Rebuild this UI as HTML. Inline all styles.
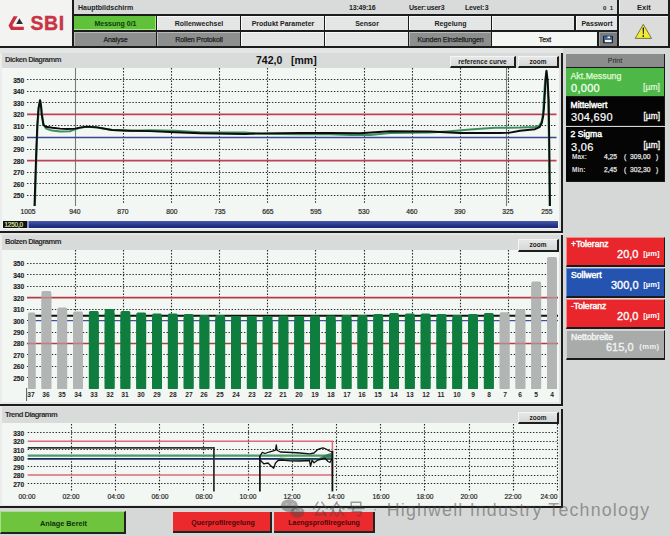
<!DOCTYPE html>
<html><head><meta charset="utf-8">
<style>
html,body{margin:0;padding:0;}
body{width:670px;height:536px;overflow:hidden;position:relative;background:#d6d8d8;font-family:"Liberation Sans", sans-serif;}
div{position:absolute;box-sizing:border-box;}
.t{white-space:nowrap;}
svg{position:absolute;}
</style></head><body>
<div style="left:0px;top:0px;width:72px;height:46px;background:#f3f4f2;"></div>
<svg style="position:absolute;left:0;top:0" width="72" height="46" viewBox="0 0 72 46">
<path d="M13.6 16.3 L17.6 16.3 L12.4 25.3 L13.6 26.8 L23.8 26.8 L23.8 29.9 L10.9 29.9 L8.5 25.4 Z" fill="#cc3040"/>
<path d="M19.4 18.3 L22.9 24 L16.2 24 Z" fill="#2e2e2e"/>
</svg>
<div class="t" style="left:30.5px;top:12px;font-size:19.5px;font-weight:bold;color:#c83444;letter-spacing:0.6px;line-height:22px;-webkit-text-stroke:0.4px #c83444;">SBI</div>
<div style="left:72px;top:0px;width:2px;height:47px;background:#1c1c1c;"></div>
<div style="left:0px;top:46px;width:670px;height:2px;background:#1c1c1c;"></div>
<div style="left:74px;top:0px;width:543px;height:14px;background:#d9dada;"></div>
<div class="t" style="left:78px;top:3px;font-size:7px;font-weight:bold;color:#222;line-height:9px;">Hauptbildschirm</div>
<div class="t" style="left:349px;top:3px;font-size:7px;font-weight:bold;color:#222;line-height:9px;letter-spacing:-0.2px;word-spacing:-1px;">13:49:16</div>
<div class="t" style="left:409px;top:3px;font-size:7px;font-weight:bold;color:#222;line-height:9px;letter-spacing:-0.2px;word-spacing:-1px;">User: user3</div>
<div class="t" style="left:465px;top:3px;font-size:7px;font-weight:bold;color:#222;line-height:9px;letter-spacing:-0.2px;word-spacing:-1px;">Level: 3</div>
<div class="t" style="left:603px;top:3.5px;font-size:6px;font-weight:bold;color:#222;line-height:9px;">0&nbsp;&nbsp;1</div>
<div style="left:74px;top:14px;width:596px;height:2px;background:#1c1c1c;"></div>
<div style="left:617px;top:0px;width:2px;height:47px;background:#1c1c1c;"></div>
<div style="left:619px;top:0px;width:49px;height:14px;background:#dcdcdc;border-left:1px solid #f0f0f0;"></div>
<div class="t" style="left:544px;top:3px;width:200px;text-align:center;font-size:7.5px;font-weight:bold;color:#222;line-height:9px;">Exit</div>
<div style="left:619px;top:16px;width:49px;height:30px;background:#dcdcdc;border-left:1px solid #f0f0f0;border-top:1px solid #f0f0f0;"></div>
<svg style="position:absolute;left:619px;top:16px" width="50" height="30" viewBox="0 0 50 30">
<path d="M24.3 8.3 L32.5 22.4 L16.2 22.4 Z" fill="#f0ea38" stroke="#6a6a3a" stroke-width="0.9" stroke-linejoin="round"/>
<path d="M23.6 11.5 L25 11.5 L24.7 18.3 L23.9 18.3 Z" fill="#111"/>
<rect x="23.6" y="19.3" width="1.4" height="1.6" fill="#111"/>
</svg>
<div style="left:668px;top:0px;width:2px;height:47px;background:#1c1c1c;"></div>
<div style="left:74px;top:30px;width:543px;height:2px;background:#1c1c1c;"></div>
<div style="left:74px;top:16px;width:543px;height:30px;background:#1c1c1c;z-index:-1;"></div>
<div style="left:74px;top:16px;width:82px;height:14px;background:#5fc23a;border-right:1px solid #a8e88a;border-bottom:1px solid #a8e88a;"></div>
<div class="t" style="left:15.5px;top:19px;width:200px;text-align:center;font-size:7px;font-weight:bold;color:#0f3a0a;line-height:9px;letter-spacing:0;">Messung 0/1</div>
<div style="left:157px;top:16px;width:83px;height:14px;background:#e4e5e5;border-top:1px solid #f8f8f8;border-left:1px solid #f8f8f8;"></div>
<div class="t" style="left:99.0px;top:19px;width:200px;text-align:center;font-size:7px;font-weight:bold;color:#222;line-height:9px;letter-spacing:0;">Rollenwechsel</div>
<div style="left:241px;top:16px;width:83px;height:14px;background:#e4e5e5;border-top:1px solid #f8f8f8;border-left:1px solid #f8f8f8;"></div>
<div class="t" style="left:183.0px;top:19px;width:200px;text-align:center;font-size:7px;font-weight:bold;color:#222;line-height:9px;letter-spacing:0;">Produkt Parameter</div>
<div style="left:325px;top:16px;width:83px;height:14px;background:#e4e5e5;border-top:1px solid #f8f8f8;border-left:1px solid #f8f8f8;"></div>
<div class="t" style="left:267.0px;top:19px;width:200px;text-align:center;font-size:7px;font-weight:bold;color:#222;line-height:9px;letter-spacing:0;">Sensor</div>
<div style="left:409px;top:16px;width:82px;height:14px;background:#e4e5e5;border-top:1px solid #f8f8f8;border-left:1px solid #f8f8f8;"></div>
<div class="t" style="left:350.5px;top:19px;width:200px;text-align:center;font-size:7px;font-weight:bold;color:#222;line-height:9px;letter-spacing:0;">Regelung</div>
<div style="left:492px;top:16px;width:82px;height:14px;background:#e4e5e5;border-top:1px solid #f8f8f8;border-left:1px solid #f8f8f8;"></div>
<div style="left:576px;top:16px;width:41px;height:14px;background:#e4e5e5;border-top:1px solid #f8f8f8;border-left:1px solid #f8f8f8;"></div>
<div class="t" style="left:497.0px;top:19px;width:200px;text-align:center;font-size:7px;font-weight:bold;color:#222;line-height:9px;letter-spacing:0;">Passwort</div>
<div style="left:74px;top:32px;width:82px;height:14px;background:#8d8f8f;border-top:1px solid #b8baba;border-left:1px solid #b8baba;"></div>
<div class="t" style="left:15.5px;top:35px;width:200px;text-align:center;font-size:7px;font-weight:normal;color:#1e1e1e;line-height:9px;letter-spacing:-0.1px;-webkit-text-stroke:0.25px #1e1e1e;">Analyse</div>
<div style="left:157px;top:32px;width:83px;height:14px;background:#8d8f8f;border-top:1px solid #b8baba;border-left:1px solid #b8baba;"></div>
<div class="t" style="left:99.0px;top:35px;width:200px;text-align:center;font-size:7px;font-weight:normal;color:#1e1e1e;line-height:9px;letter-spacing:-0.1px;-webkit-text-stroke:0.25px #1e1e1e;">Rollen Protokoll</div>
<div style="left:241px;top:32px;width:83px;height:14px;background:#e4e5e5;border-top:1px solid #f8f8f8;border-left:1px solid #f8f8f8;"></div>
<div style="left:325px;top:32px;width:83px;height:14px;background:#e4e5e5;border-top:1px solid #f8f8f8;border-left:1px solid #f8f8f8;"></div>
<div style="left:409px;top:32px;width:82px;height:14px;background:#8d8f8f;border-top:1px solid #b8baba;border-left:1px solid #b8baba;"></div>
<div class="t" style="left:350.5px;top:35px;width:200px;text-align:center;font-size:7px;font-weight:normal;color:#1e1e1e;line-height:9px;letter-spacing:-0.1px;-webkit-text-stroke:0.25px #1e1e1e;">Kunden Einstellungen</div>
<div style="left:492px;top:32px;width:105px;height:14px;background:#f4f6f4;"></div>
<div class="t" style="left:445.0px;top:35px;width:200px;text-align:center;font-size:7px;font-weight:normal;color:#222;line-height:9px;letter-spacing:-0.1px;-webkit-text-stroke:0.25px #222;">Text</div>
<div style="left:599px;top:32px;width:18px;height:14px;background:#7a7c7e;border-top:1px solid #a0a2a4;border-left:1px solid #a0a2a4;"></div>
<svg style="position:absolute;left:599px;top:32px" width="18" height="14" viewBox="0 0 18 14">
<rect x="4" y="3.7" width="10" height="7.6" rx="1" fill="#1a2030"/>
<rect x="5" y="4.4" width="8" height="3.2" fill="#3a6a9a"/>
<rect x="8.5" y="4.5" width="2.5" height="1.6" fill="#e8f4ff"/>
<rect x="5.7" y="7.8" width="7" height="2.4" fill="#f4f6f8"/>
</svg>
<div style="left:0px;top:48px;width:563px;height:5px;background:#e4e5e5;"></div>
<div style="left:0px;top:53px;width:2px;height:179px;#ececec;background:#ececec;"></div>
<div style="left:2px;top:53px;width:559px;height:15px;background:#d9dada;"></div>
<div class="t" style="left:5px;top:54.6px;font-size:7.6px;font-weight:bold;color:#2e2e2e;letter-spacing:-0.55px;line-height:10px;">Dicken Diagramm</div>
<div class="t" style="left:256px;top:54px;font-size:10.5px;font-weight:bold;color:#111;line-height:12px;">742,0&nbsp;&nbsp;&nbsp;[mm]</div>
<div style="left:450px;top:56px;width:66px;height:12px;background:linear-gradient(#e6e7e7,#d6d7d7);border-right:2px solid #1e1e1e;border-bottom:2px solid #1e1e1e;border-top:1px solid #f4f4f4;border-left:1px solid #f4f4f4;"></div>
<div class="t" style="left:382.5px;top:57px;width:200px;text-align:center;font-size:6.5px;font-weight:bold;color:#1a1a1a;line-height:9px;">reference curve</div>
<div style="left:518px;top:56px;width:41px;height:12px;background:linear-gradient(#e6e7e7,#d6d7d7);border-right:2px solid #1e1e1e;border-bottom:2px solid #1e1e1e;border-top:1px solid #f4f4f4;border-left:1px solid #f4f4f4;"></div>
<div class="t" style="left:438.0px;top:57px;width:200px;text-align:center;font-size:6.5px;font-weight:bold;color:#1a1a1a;line-height:9px;">zoom</div>
<div style="left:2px;top:68px;width:559px;height:163px;background:#f3f7f3;border-right:2px solid #e0e2e2;border-bottom:2px solid #e6e8e8;"></div>
<div style="left:561px;top:53px;width:2px;height:179px;background:#1c1c1c;"></div>
<div style="left:0px;top:231px;width:563px;height:2px;background:#1c1c1c;"></div>
<div style="left:0px;top:233px;width:563px;height:2px;background:#e4e5e5;"></div>
<div style="left:0px;top:235px;width:2px;height:170px;background:#ececec;"></div>
<div style="left:2px;top:235px;width:559px;height:15px;background:#d9dada;"></div>
<div class="t" style="left:5px;top:236.8px;font-size:7.6px;font-weight:bold;color:#2e2e2e;letter-spacing:-0.55px;line-height:10px;">Bolzen Diagramm</div>
<div style="left:2px;top:250px;width:559px;height:154px;background:#f3f7f3;border-right:2px solid #e0e2e2;border-bottom:2px solid #e6e8e8;"></div>
<div style="left:518px;top:239px;width:41px;height:12.5px;background:linear-gradient(#e6e7e7,#d6d7d7);border-right:2px solid #1e1e1e;border-bottom:2px solid #1e1e1e;border-top:1px solid #f4f4f4;border-left:1px solid #f4f4f4;"></div>
<div class="t" style="left:438.0px;top:240px;width:200px;text-align:center;font-size:6.5px;font-weight:bold;color:#1a1a1a;line-height:9px;">zoom</div>
<div style="left:561px;top:235px;width:2px;height:170px;background:#1c1c1c;"></div>
<div style="left:0px;top:404px;width:563px;height:2px;background:#1c1c1c;"></div>
<div style="left:0px;top:406px;width:563px;height:1px;background:#e4e5e5;"></div>
<div style="left:0px;top:407px;width:2px;height:101px;background:#ececec;"></div>
<div style="left:2px;top:407px;width:559px;height:16px;background:#d9dada;"></div>
<div class="t" style="left:5px;top:410px;font-size:7.6px;font-weight:bold;color:#2e2e2e;letter-spacing:-0.55px;line-height:10px;">Trend Diagramm</div>
<div style="left:2px;top:423px;width:559px;height:83px;background:#f3f7f3;border-right:2px solid #e0e2e2;border-bottom:1px solid #e6e8e8;"></div>
<div style="left:518px;top:412px;width:41px;height:12px;background:linear-gradient(#e6e7e7,#d6d7d7);border-right:2px solid #1e1e1e;border-bottom:2px solid #1e1e1e;border-top:1px solid #f4f4f4;border-left:1px solid #f4f4f4;"></div>
<div class="t" style="left:438.0px;top:413px;width:200px;text-align:center;font-size:6.5px;font-weight:bold;color:#1a1a1a;line-height:9px;">zoom</div>
<div style="left:561px;top:409px;width:2px;height:99px;background:#1c1c1c;"></div>
<div style="left:0px;top:506px;width:563px;height:2px;background:#1c1c1c;"></div>
<div class="t" style="left:-175.8px;top:191.2px;width:200px;text-align:right;transform:scaleX(0.86);transform-origin:100% 50%;font-size:7.7px;font-weight:bold;color:#1e1e1e;line-height:9px;letter-spacing:-0.1px;-webkit-text-stroke:0.15px #1e1e1e;">250</div>
<div class="t" style="left:-175.8px;top:179.65999999999997px;width:200px;text-align:right;transform:scaleX(0.86);transform-origin:100% 50%;font-size:7.7px;font-weight:bold;color:#1e1e1e;line-height:9px;letter-spacing:-0.1px;-webkit-text-stroke:0.15px #1e1e1e;">260</div>
<div class="t" style="left:-175.8px;top:168.12px;width:200px;text-align:right;transform:scaleX(0.86);transform-origin:100% 50%;font-size:7.7px;font-weight:bold;color:#1e1e1e;line-height:9px;letter-spacing:-0.1px;-webkit-text-stroke:0.15px #1e1e1e;">270</div>
<div class="t" style="left:-175.8px;top:156.57999999999998px;width:200px;text-align:right;transform:scaleX(0.86);transform-origin:100% 50%;font-size:7.7px;font-weight:bold;color:#1e1e1e;line-height:9px;letter-spacing:-0.1px;-webkit-text-stroke:0.15px #1e1e1e;">280</div>
<div class="t" style="left:-175.8px;top:145.04px;width:200px;text-align:right;transform:scaleX(0.86);transform-origin:100% 50%;font-size:7.7px;font-weight:bold;color:#1e1e1e;line-height:9px;letter-spacing:-0.1px;-webkit-text-stroke:0.15px #1e1e1e;">290</div>
<div class="t" style="left:-175.8px;top:133.5px;width:200px;text-align:right;transform:scaleX(0.86);transform-origin:100% 50%;font-size:7.7px;font-weight:bold;color:#1e1e1e;line-height:9px;letter-spacing:-0.1px;-webkit-text-stroke:0.15px #1e1e1e;">300</div>
<div class="t" style="left:-175.8px;top:121.96px;width:200px;text-align:right;transform:scaleX(0.86);transform-origin:100% 50%;font-size:7.7px;font-weight:bold;color:#1e1e1e;line-height:9px;letter-spacing:-0.1px;-webkit-text-stroke:0.15px #1e1e1e;">310</div>
<div class="t" style="left:-175.8px;top:110.41999999999999px;width:200px;text-align:right;transform:scaleX(0.86);transform-origin:100% 50%;font-size:7.7px;font-weight:bold;color:#1e1e1e;line-height:9px;letter-spacing:-0.1px;-webkit-text-stroke:0.15px #1e1e1e;">320</div>
<div class="t" style="left:-175.8px;top:98.88px;width:200px;text-align:right;transform:scaleX(0.86);transform-origin:100% 50%;font-size:7.7px;font-weight:bold;color:#1e1e1e;line-height:9px;letter-spacing:-0.1px;-webkit-text-stroke:0.15px #1e1e1e;">330</div>
<div class="t" style="left:-175.8px;top:87.34px;width:200px;text-align:right;transform:scaleX(0.86);transform-origin:100% 50%;font-size:7.7px;font-weight:bold;color:#1e1e1e;line-height:9px;letter-spacing:-0.1px;-webkit-text-stroke:0.15px #1e1e1e;">340</div>
<div class="t" style="left:-175.8px;top:75.8px;width:200px;text-align:right;transform:scaleX(0.86);transform-origin:100% 50%;font-size:7.7px;font-weight:bold;color:#1e1e1e;line-height:9px;letter-spacing:-0.1px;-webkit-text-stroke:0.15px #1e1e1e;">350</div>
<svg style="left:2px;top:68px" width="559" height="162" viewBox="2 68 559 162">
<line x1="27" y1="195.5" x2="556.5" y2="195.5" stroke="#2a2a2a" stroke-width="1.2" stroke-dasharray="1.4 1.7" fill="none"/>
<line x1="27" y1="183.5" x2="556.5" y2="183.5" stroke="#2a2a2a" stroke-width="1.2" stroke-dasharray="1.4 1.7" fill="none"/>
<line x1="27" y1="172.5" x2="556.5" y2="172.5" stroke="#2a2a2a" stroke-width="1.2" stroke-dasharray="1.4 1.7" fill="none"/>
<line x1="27" y1="149.5" x2="556.5" y2="149.5" stroke="#2a2a2a" stroke-width="1.2" stroke-dasharray="1.4 1.7" fill="none"/>
<line x1="27" y1="125.5" x2="556.5" y2="125.5" stroke="#2a2a2a" stroke-width="1.2" stroke-dasharray="1.4 1.7" fill="none"/>
<line x1="27" y1="102.5" x2="556.5" y2="102.5" stroke="#2a2a2a" stroke-width="1.2" stroke-dasharray="1.4 1.7" fill="none"/>
<line x1="27" y1="91.5" x2="556.5" y2="91.5" stroke="#2a2a2a" stroke-width="1.2" stroke-dasharray="1.4 1.7" fill="none"/>
<line x1="27" y1="79.5" x2="556.5" y2="79.5" stroke="#2a2a2a" stroke-width="1.2" stroke-dasharray="1.4 1.7" fill="none"/>
<line x1="123.5" y1="68" x2="123.5" y2="203" stroke="#2a2a2a" stroke-width="1.1" stroke-dasharray="1.5 1.6" fill="none"/>
<line x1="171.5" y1="68" x2="171.5" y2="203" stroke="#2a2a2a" stroke-width="1.1" stroke-dasharray="1.5 1.6" fill="none"/>
<line x1="219.5" y1="68" x2="219.5" y2="203" stroke="#2a2a2a" stroke-width="1.1" stroke-dasharray="1.5 1.6" fill="none"/>
<line x1="267.5" y1="68" x2="267.5" y2="203" stroke="#2a2a2a" stroke-width="1.1" stroke-dasharray="1.5 1.6" fill="none"/>
<line x1="315.5" y1="68" x2="315.5" y2="203" stroke="#2a2a2a" stroke-width="1.1" stroke-dasharray="1.5 1.6" fill="none"/>
<line x1="364.5" y1="68" x2="364.5" y2="203" stroke="#2a2a2a" stroke-width="1.1" stroke-dasharray="1.5 1.6" fill="none"/>
<line x1="412.5" y1="68" x2="412.5" y2="203" stroke="#2a2a2a" stroke-width="1.1" stroke-dasharray="1.5 1.6" fill="none"/>
<line x1="460.5" y1="68" x2="460.5" y2="203" stroke="#2a2a2a" stroke-width="1.1" stroke-dasharray="1.5 1.6" fill="none"/>
<line x1="508.5" y1="68" x2="508.5" y2="203" stroke="#2a2a2a" stroke-width="1.1" stroke-dasharray="1.5 1.6" fill="none"/>
<line x1="75.5" y1="68" x2="75.5" y2="206" stroke="#7a7a7a" stroke-width="1.1"/>
<line x1="506.5" y1="68" x2="506.5" y2="206" stroke="#7a7a7a" stroke-width="1.1"/>
<line x1="27" y1="114.4" x2="556.5" y2="114.4" stroke="#bc4256" stroke-width="1.7"/>
<line x1="27" y1="160.6" x2="556.5" y2="160.6" stroke="#bc4256" stroke-width="1.7"/>
<line x1="27" y1="137.5" x2="556.5" y2="137.5" stroke="#3a4694" stroke-width="1.5"/>
<polyline points="34.9,206 36.6,150 37.6,125 38.8,108 40.2,100.5 41.3,107 42,114 43.5,124 46,128.6 52,130.6 60,131.4 70,131.2 75,129.4 80,127.8 86.7,126.8 97.2,127.6 112,130 130,130.7 150,130.2 175,130.8 200,132.2 230,132.4 245,132.4 260,133.8 300,134.2 330,134.2 350,135 370,135 390,133 430,132.5 450,131.2 470,129.5 495,127.8 520,127.6 535,127 539.5,125.5 541.8,121 543,114 543.8,100 545,82 546.2,72 547.3,80 548.2,100 548.9,140 549.6,206" fill="none" stroke="#3c9062" stroke-width="2" stroke-linejoin="round"/>
<polyline points="34.5,206 36.3,150 37.3,125 38.5,108 40,100.2 41,106 41.6,114 43.4,125 45.7,126.8 52.4,127.8 60,128.6 67.3,129 75,128.6 80,127.6 86.7,126.6 97.2,127.4 112,130 130,130.7 150,131.1 175,132.2 200,133.2 230,133.8 245,134 260,133.4 300,133 330,133 360,133.2 390,131.3 430,131.5 460,133 500,133 510,132.6 520,130.7 535,129.2 539.5,127.2 541.8,123 543.2,116 544,108 544.6,98 545.6,80 546.5,70.7 547.6,80 548.7,100 549.4,150 550,206" fill="none" stroke="#0c0c0c" stroke-width="1.9" stroke-linejoin="round"/>
</svg>
<div class="t" style="left:-72.5px;top:206.5px;width:200px;text-align:center;transform:scaleX(0.88);font-size:7.7px;color:#262626;line-height:9px;-webkit-text-stroke:0.2px #262626;">1005</div>
<div class="t" style="left:-24.700000000000003px;top:206.5px;width:200px;text-align:center;transform:scaleX(0.88);font-size:7.7px;color:#262626;line-height:9px;-webkit-text-stroke:0.2px #262626;">940</div>
<div class="t" style="left:23.400000000000006px;top:206.5px;width:200px;text-align:center;transform:scaleX(0.88);font-size:7.7px;color:#262626;line-height:9px;-webkit-text-stroke:0.2px #262626;">870</div>
<div class="t" style="left:71.5px;top:206.5px;width:200px;text-align:center;transform:scaleX(0.88);font-size:7.7px;color:#262626;line-height:9px;-webkit-text-stroke:0.2px #262626;">800</div>
<div class="t" style="left:119.80000000000001px;top:206.5px;width:200px;text-align:center;transform:scaleX(0.88);font-size:7.7px;color:#262626;line-height:9px;-webkit-text-stroke:0.2px #262626;">735</div>
<div class="t" style="left:167.89999999999998px;top:206.5px;width:200px;text-align:center;transform:scaleX(0.88);font-size:7.7px;color:#262626;line-height:9px;-webkit-text-stroke:0.2px #262626;">665</div>
<div class="t" style="left:216px;top:206.5px;width:200px;text-align:center;transform:scaleX(0.88);font-size:7.7px;color:#262626;line-height:9px;-webkit-text-stroke:0.2px #262626;">595</div>
<div class="t" style="left:264.1px;top:206.5px;width:200px;text-align:center;transform:scaleX(0.88);font-size:7.7px;color:#262626;line-height:9px;-webkit-text-stroke:0.2px #262626;">530</div>
<div class="t" style="left:312.3px;top:206.5px;width:200px;text-align:center;transform:scaleX(0.88);font-size:7.7px;color:#262626;line-height:9px;-webkit-text-stroke:0.2px #262626;">460</div>
<div class="t" style="left:360.4px;top:206.5px;width:200px;text-align:center;transform:scaleX(0.88);font-size:7.7px;color:#262626;line-height:9px;-webkit-text-stroke:0.2px #262626;">390</div>
<div class="t" style="left:408.4px;top:206.5px;width:200px;text-align:center;transform:scaleX(0.88);font-size:7.7px;color:#262626;line-height:9px;-webkit-text-stroke:0.2px #262626;">325</div>
<div class="t" style="left:447px;top:206.5px;width:200px;text-align:center;transform:scaleX(0.88);font-size:7.7px;color:#262626;line-height:9px;-webkit-text-stroke:0.2px #262626;">255</div>
<div style="left:3px;top:221px;width:555px;height:7px;background:linear-gradient(#4a5aa8,#26358a 60%,#1a2870);"></div>
<div style="left:3px;top:221px;width:24px;height:7px;background:#111;"></div>
<div style="left:27px;top:221px;width:2px;height:7px;background:#8a9ad0;"></div>
<div class="t" style="left:4.5px;top:220.5px;font-size:6.4px;color:#dfe6a0;line-height:7.5px;letter-spacing:-0.2px;-webkit-text-stroke:0.2px #dfe6a0;">1250,0</div>
<div class="t" style="left:-175.8px;top:373.79999999999995px;width:200px;text-align:right;transform:scaleX(0.86);transform-origin:100% 50%;font-size:7.7px;font-weight:bold;color:#1e1e1e;line-height:9px;letter-spacing:-0.1px;-webkit-text-stroke:0.15px #1e1e1e;">250</div>
<div class="t" style="left:-175.8px;top:362.35999999999996px;width:200px;text-align:right;transform:scaleX(0.86);transform-origin:100% 50%;font-size:7.7px;font-weight:bold;color:#1e1e1e;line-height:9px;letter-spacing:-0.1px;-webkit-text-stroke:0.15px #1e1e1e;">260</div>
<div class="t" style="left:-175.8px;top:350.91999999999996px;width:200px;text-align:right;transform:scaleX(0.86);transform-origin:100% 50%;font-size:7.7px;font-weight:bold;color:#1e1e1e;line-height:9px;letter-spacing:-0.1px;-webkit-text-stroke:0.15px #1e1e1e;">270</div>
<div class="t" style="left:-175.8px;top:339.47999999999996px;width:200px;text-align:right;transform:scaleX(0.86);transform-origin:100% 50%;font-size:7.7px;font-weight:bold;color:#1e1e1e;line-height:9px;letter-spacing:-0.1px;-webkit-text-stroke:0.15px #1e1e1e;">280</div>
<div class="t" style="left:-175.8px;top:328.03999999999996px;width:200px;text-align:right;transform:scaleX(0.86);transform-origin:100% 50%;font-size:7.7px;font-weight:bold;color:#1e1e1e;line-height:9px;letter-spacing:-0.1px;-webkit-text-stroke:0.15px #1e1e1e;">290</div>
<div class="t" style="left:-175.8px;top:316.59999999999997px;width:200px;text-align:right;transform:scaleX(0.86);transform-origin:100% 50%;font-size:7.7px;font-weight:bold;color:#1e1e1e;line-height:9px;letter-spacing:-0.1px;-webkit-text-stroke:0.15px #1e1e1e;">300</div>
<div class="t" style="left:-175.8px;top:305.15999999999997px;width:200px;text-align:right;transform:scaleX(0.86);transform-origin:100% 50%;font-size:7.7px;font-weight:bold;color:#1e1e1e;line-height:9px;letter-spacing:-0.1px;-webkit-text-stroke:0.15px #1e1e1e;">310</div>
<div class="t" style="left:-175.8px;top:293.71999999999997px;width:200px;text-align:right;transform:scaleX(0.86);transform-origin:100% 50%;font-size:7.7px;font-weight:bold;color:#1e1e1e;line-height:9px;letter-spacing:-0.1px;-webkit-text-stroke:0.15px #1e1e1e;">320</div>
<div class="t" style="left:-175.8px;top:282.28px;width:200px;text-align:right;transform:scaleX(0.86);transform-origin:100% 50%;font-size:7.7px;font-weight:bold;color:#1e1e1e;line-height:9px;letter-spacing:-0.1px;-webkit-text-stroke:0.15px #1e1e1e;">330</div>
<div class="t" style="left:-175.8px;top:270.84px;width:200px;text-align:right;transform:scaleX(0.86);transform-origin:100% 50%;font-size:7.7px;font-weight:bold;color:#1e1e1e;line-height:9px;letter-spacing:-0.1px;-webkit-text-stroke:0.15px #1e1e1e;">340</div>
<div class="t" style="left:-175.8px;top:259.4px;width:200px;text-align:right;transform:scaleX(0.86);transform-origin:100% 50%;font-size:7.7px;font-weight:bold;color:#1e1e1e;line-height:9px;letter-spacing:-0.1px;-webkit-text-stroke:0.15px #1e1e1e;">350</div>
<svg style="left:2px;top:250px" width="559" height="153" viewBox="2 250 559 153">
<line x1="27" y1="377.5" x2="556.5" y2="377.5" stroke="#2a2a2a" stroke-width="1.2" stroke-dasharray="1.4 1.7" fill="none"/>
<line x1="27" y1="366.5" x2="556.5" y2="366.5" stroke="#2a2a2a" stroke-width="1.2" stroke-dasharray="1.4 1.7" fill="none"/>
<line x1="27" y1="354.5" x2="556.5" y2="354.5" stroke="#2a2a2a" stroke-width="1.2" stroke-dasharray="1.4 1.7" fill="none"/>
<line x1="27" y1="332.5" x2="556.5" y2="332.5" stroke="#2a2a2a" stroke-width="1.2" stroke-dasharray="1.4 1.7" fill="none"/>
<line x1="27" y1="320.5" x2="556.5" y2="320.5" stroke="#2a2a2a" stroke-width="1.2" stroke-dasharray="1.4 1.7" fill="none"/>
<line x1="27" y1="309.5" x2="556.5" y2="309.5" stroke="#2a2a2a" stroke-width="1.2" stroke-dasharray="1.4 1.7" fill="none"/>
<line x1="27" y1="286.5" x2="556.5" y2="286.5" stroke="#2a2a2a" stroke-width="1.2" stroke-dasharray="1.4 1.7" fill="none"/>
<line x1="27" y1="274.5" x2="556.5" y2="274.5" stroke="#2a2a2a" stroke-width="1.2" stroke-dasharray="1.4 1.7" fill="none"/>
<line x1="27" y1="263.5" x2="556.5" y2="263.5" stroke="#2a2a2a" stroke-width="1.2" stroke-dasharray="1.4 1.7" fill="none"/>
<line x1="75.5" y1="250" x2="75.5" y2="389" stroke="#2a2a2a" stroke-width="1.1" stroke-dasharray="1.5 1.6" fill="none"/>
<line x1="123.5" y1="250" x2="123.5" y2="389" stroke="#2a2a2a" stroke-width="1.1" stroke-dasharray="1.5 1.6" fill="none"/>
<line x1="171.5" y1="250" x2="171.5" y2="389" stroke="#2a2a2a" stroke-width="1.1" stroke-dasharray="1.5 1.6" fill="none"/>
<line x1="219.5" y1="250" x2="219.5" y2="389" stroke="#2a2a2a" stroke-width="1.1" stroke-dasharray="1.5 1.6" fill="none"/>
<line x1="267.5" y1="250" x2="267.5" y2="389" stroke="#2a2a2a" stroke-width="1.1" stroke-dasharray="1.5 1.6" fill="none"/>
<line x1="315.5" y1="250" x2="315.5" y2="389" stroke="#2a2a2a" stroke-width="1.1" stroke-dasharray="1.5 1.6" fill="none"/>
<line x1="364.5" y1="250" x2="364.5" y2="389" stroke="#2a2a2a" stroke-width="1.1" stroke-dasharray="1.5 1.6" fill="none"/>
<line x1="412.5" y1="250" x2="412.5" y2="389" stroke="#2a2a2a" stroke-width="1.1" stroke-dasharray="1.5 1.6" fill="none"/>
<line x1="460.5" y1="250" x2="460.5" y2="389" stroke="#2a2a2a" stroke-width="1.1" stroke-dasharray="1.5 1.6" fill="none"/>
<line x1="508.5" y1="250" x2="508.5" y2="389" stroke="#2a2a2a" stroke-width="1.1" stroke-dasharray="1.5 1.6" fill="none"/>
<line x1="27" y1="297.7" x2="558" y2="297.7" stroke="#b43c44" stroke-width="1.7"/>
<line x1="27" y1="343.5" x2="558" y2="343.5" stroke="#b43c44" stroke-width="1.7"/>
<line x1="28" y1="315.8" x2="558" y2="315.8" stroke="#111" stroke-width="2"/>
<line x1="28" y1="320.6" x2="558" y2="320.6" stroke="#4050a0" stroke-width="1.4"/>
<rect x="28.00" y="312.5" width="7.50" height="76.5" rx="1.5" fill="#b3b5b5"/>
<rect x="28.00" y="316.5" width="7.50" height="72.5" fill="#b3b5b5"/>
<rect x="41.50" y="291" width="9.80" height="98.0" rx="1.5" fill="#b3b5b5"/>
<rect x="41.50" y="295" width="9.80" height="94.0" fill="#b3b5b5"/>
<rect x="57.30" y="307.5" width="9.80" height="81.5" rx="1.5" fill="#b3b5b5"/>
<rect x="57.30" y="311.5" width="9.80" height="77.5" fill="#b3b5b5"/>
<rect x="73.10" y="311.5" width="9.80" height="77.5" rx="1.5" fill="#b3b5b5"/>
<rect x="73.10" y="315.5" width="9.80" height="73.5" fill="#b3b5b5"/>
<rect x="88.90" y="311" width="9.80" height="78.0" rx="1.5" fill="#0e7d3e"/>
<rect x="88.90" y="315" width="9.80" height="74.0" fill="#0e7d3e"/>
<rect x="104.70" y="309" width="9.80" height="80.0" rx="1.5" fill="#0e7d3e"/>
<rect x="104.70" y="313" width="9.80" height="76.0" fill="#0e7d3e"/>
<rect x="120.50" y="311" width="9.80" height="78.0" rx="1.5" fill="#0e7d3e"/>
<rect x="120.50" y="315" width="9.80" height="74.0" fill="#0e7d3e"/>
<rect x="136.30" y="312.5" width="9.80" height="76.5" rx="1.5" fill="#0e7d3e"/>
<rect x="136.30" y="316.5" width="9.80" height="72.5" fill="#0e7d3e"/>
<rect x="152.10" y="313.5" width="9.80" height="75.5" rx="1.5" fill="#0e7d3e"/>
<rect x="152.10" y="317.5" width="9.80" height="71.5" fill="#0e7d3e"/>
<rect x="167.90" y="313.5" width="9.80" height="75.5" rx="1.5" fill="#0e7d3e"/>
<rect x="167.90" y="317.5" width="9.80" height="71.5" fill="#0e7d3e"/>
<rect x="183.70" y="314" width="9.80" height="75.0" rx="1.5" fill="#0e7d3e"/>
<rect x="183.70" y="318" width="9.80" height="71.0" fill="#0e7d3e"/>
<rect x="199.50" y="315" width="9.80" height="74.0" rx="1.5" fill="#0e7d3e"/>
<rect x="199.50" y="319" width="9.80" height="70.0" fill="#0e7d3e"/>
<rect x="215.30" y="315" width="9.80" height="74.0" rx="1.5" fill="#0e7d3e"/>
<rect x="215.30" y="319" width="9.80" height="70.0" fill="#0e7d3e"/>
<rect x="231.10" y="316" width="9.80" height="73.0" rx="1.5" fill="#0e7d3e"/>
<rect x="231.10" y="320" width="9.80" height="69.0" fill="#0e7d3e"/>
<rect x="246.90" y="316" width="9.80" height="73.0" rx="1.5" fill="#0e7d3e"/>
<rect x="246.90" y="320" width="9.80" height="69.0" fill="#0e7d3e"/>
<rect x="262.70" y="316" width="9.80" height="73.0" rx="1.5" fill="#0e7d3e"/>
<rect x="262.70" y="320" width="9.80" height="69.0" fill="#0e7d3e"/>
<rect x="278.50" y="315.5" width="9.80" height="73.5" rx="1.5" fill="#0e7d3e"/>
<rect x="278.50" y="319.5" width="9.80" height="69.5" fill="#0e7d3e"/>
<rect x="294.30" y="316" width="9.80" height="73.0" rx="1.5" fill="#0e7d3e"/>
<rect x="294.30" y="320" width="9.80" height="69.0" fill="#0e7d3e"/>
<rect x="310.10" y="315.5" width="9.80" height="73.5" rx="1.5" fill="#0e7d3e"/>
<rect x="310.10" y="319.5" width="9.80" height="69.5" fill="#0e7d3e"/>
<rect x="325.90" y="315.5" width="9.80" height="73.5" rx="1.5" fill="#0e7d3e"/>
<rect x="325.90" y="319.5" width="9.80" height="69.5" fill="#0e7d3e"/>
<rect x="341.70" y="315" width="9.80" height="74.0" rx="1.5" fill="#0e7d3e"/>
<rect x="341.70" y="319" width="9.80" height="70.0" fill="#0e7d3e"/>
<rect x="357.50" y="315" width="9.80" height="74.0" rx="1.5" fill="#0e7d3e"/>
<rect x="357.50" y="319" width="9.80" height="70.0" fill="#0e7d3e"/>
<rect x="373.30" y="314" width="9.80" height="75.0" rx="1.5" fill="#0e7d3e"/>
<rect x="373.30" y="318" width="9.80" height="71.0" fill="#0e7d3e"/>
<rect x="389.10" y="313" width="9.80" height="76.0" rx="1.5" fill="#0e7d3e"/>
<rect x="389.10" y="317" width="9.80" height="72.0" fill="#0e7d3e"/>
<rect x="404.90" y="313.5" width="9.80" height="75.5" rx="1.5" fill="#0e7d3e"/>
<rect x="404.90" y="317.5" width="9.80" height="71.5" fill="#0e7d3e"/>
<rect x="420.70" y="313.5" width="9.80" height="75.5" rx="1.5" fill="#0e7d3e"/>
<rect x="420.70" y="317.5" width="9.80" height="71.5" fill="#0e7d3e"/>
<rect x="436.50" y="314" width="9.80" height="75.0" rx="1.5" fill="#0e7d3e"/>
<rect x="436.50" y="318" width="9.80" height="71.0" fill="#0e7d3e"/>
<rect x="452.30" y="315" width="9.80" height="74.0" rx="1.5" fill="#0e7d3e"/>
<rect x="452.30" y="319" width="9.80" height="70.0" fill="#0e7d3e"/>
<rect x="468.10" y="314" width="9.80" height="75.0" rx="1.5" fill="#0e7d3e"/>
<rect x="468.10" y="318" width="9.80" height="71.0" fill="#0e7d3e"/>
<rect x="483.90" y="313" width="9.80" height="76.0" rx="1.5" fill="#0e7d3e"/>
<rect x="483.90" y="317" width="9.80" height="72.0" fill="#0e7d3e"/>
<rect x="499.70" y="312.2" width="9.80" height="76.8" rx="1.5" fill="#b3b5b5"/>
<rect x="499.70" y="316.2" width="9.80" height="72.8" fill="#b3b5b5"/>
<rect x="515.50" y="309.2" width="9.80" height="79.8" rx="1.5" fill="#b3b5b5"/>
<rect x="515.50" y="313.2" width="9.80" height="75.8" fill="#b3b5b5"/>
<rect x="531.30" y="281.4" width="9.80" height="107.6" rx="1.5" fill="#b3b5b5"/>
<rect x="531.30" y="285.4" width="9.80" height="103.6" fill="#b3b5b5"/>
<rect x="547.10" y="257" width="9.80" height="132.0" rx="1.5" fill="#b3b5b5"/>
<rect x="547.10" y="261" width="9.80" height="128.0" fill="#b3b5b5"/>
<rect x="28.00" y="342.7" width="7.50" height="1.6" fill="#c04050" opacity="0.45"/>
<rect x="41.50" y="296.9" width="9.80" height="1.6" fill="#c04050" opacity="0.45"/>
<rect x="41.50" y="342.7" width="9.80" height="1.6" fill="#c04050" opacity="0.45"/>
<rect x="57.30" y="342.7" width="9.80" height="1.6" fill="#c04050" opacity="0.45"/>
<rect x="73.10" y="342.7" width="9.80" height="1.6" fill="#c04050" opacity="0.45"/>
<rect x="499.70" y="342.7" width="9.80" height="1.6" fill="#c04050" opacity="0.45"/>
<rect x="515.50" y="342.7" width="9.80" height="1.6" fill="#c04050" opacity="0.45"/>
<rect x="531.30" y="296.9" width="9.80" height="1.6" fill="#c04050" opacity="0.45"/>
<rect x="531.30" y="342.7" width="9.80" height="1.6" fill="#c04050" opacity="0.45"/>
<rect x="547.10" y="296.9" width="9.80" height="1.6" fill="#c04050" opacity="0.45"/>
<rect x="547.10" y="342.7" width="9.80" height="1.6" fill="#c04050" opacity="0.45"/>
<line x1="26.6" y1="388" x2="26.6" y2="401" stroke="#555" stroke-width="1"/>
</svg>
<div class="t" style="left:-69.4px;top:389.5px;width:200px;text-align:center;transform:scaleX(0.86);font-size:7.7px;font-weight:bold;color:#262626;line-height:9px;">37</div>
<div class="t" style="left:-53.599999999999994px;top:389.5px;width:200px;text-align:center;transform:scaleX(0.86);font-size:7.7px;font-weight:bold;color:#262626;line-height:9px;">36</div>
<div class="t" style="left:-37.8px;top:389.5px;width:200px;text-align:center;transform:scaleX(0.86);font-size:7.7px;font-weight:bold;color:#262626;line-height:9px;">35</div>
<div class="t" style="left:-22.0px;top:389.5px;width:200px;text-align:center;transform:scaleX(0.86);font-size:7.7px;font-weight:bold;color:#262626;line-height:9px;">34</div>
<div class="t" style="left:-6.199999999999989px;top:389.5px;width:200px;text-align:center;transform:scaleX(0.86);font-size:7.7px;font-weight:bold;color:#262626;line-height:9px;">33</div>
<div class="t" style="left:9.599999999999994px;top:389.5px;width:200px;text-align:center;transform:scaleX(0.86);font-size:7.7px;font-weight:bold;color:#262626;line-height:9px;">32</div>
<div class="t" style="left:25.400000000000006px;top:389.5px;width:200px;text-align:center;transform:scaleX(0.86);font-size:7.7px;font-weight:bold;color:#262626;line-height:9px;">31</div>
<div class="t" style="left:41.20000000000002px;top:389.5px;width:200px;text-align:center;transform:scaleX(0.86);font-size:7.7px;font-weight:bold;color:#262626;line-height:9px;">30</div>
<div class="t" style="left:57.0px;top:389.5px;width:200px;text-align:center;transform:scaleX(0.86);font-size:7.7px;font-weight:bold;color:#262626;line-height:9px;">29</div>
<div class="t" style="left:72.80000000000001px;top:389.5px;width:200px;text-align:center;transform:scaleX(0.86);font-size:7.7px;font-weight:bold;color:#262626;line-height:9px;">28</div>
<div class="t" style="left:88.6px;top:389.5px;width:200px;text-align:center;transform:scaleX(0.86);font-size:7.7px;font-weight:bold;color:#262626;line-height:9px;">27</div>
<div class="t" style="left:104.4px;top:389.5px;width:200px;text-align:center;transform:scaleX(0.86);font-size:7.7px;font-weight:bold;color:#262626;line-height:9px;">26</div>
<div class="t" style="left:120.20000000000002px;top:389.5px;width:200px;text-align:center;transform:scaleX(0.86);font-size:7.7px;font-weight:bold;color:#262626;line-height:9px;">25</div>
<div class="t" style="left:136.0px;top:389.5px;width:200px;text-align:center;transform:scaleX(0.86);font-size:7.7px;font-weight:bold;color:#262626;line-height:9px;">24</div>
<div class="t" style="left:151.8px;top:389.5px;width:200px;text-align:center;transform:scaleX(0.86);font-size:7.7px;font-weight:bold;color:#262626;line-height:9px;">23</div>
<div class="t" style="left:167.60000000000002px;top:389.5px;width:200px;text-align:center;transform:scaleX(0.86);font-size:7.7px;font-weight:bold;color:#262626;line-height:9px;">22</div>
<div class="t" style="left:183.40000000000003px;top:389.5px;width:200px;text-align:center;transform:scaleX(0.86);font-size:7.7px;font-weight:bold;color:#262626;line-height:9px;">21</div>
<div class="t" style="left:199.20000000000005px;top:389.5px;width:200px;text-align:center;transform:scaleX(0.86);font-size:7.7px;font-weight:bold;color:#262626;line-height:9px;">20</div>
<div class="t" style="left:215.00000000000006px;top:389.5px;width:200px;text-align:center;transform:scaleX(0.86);font-size:7.7px;font-weight:bold;color:#262626;line-height:9px;">19</div>
<div class="t" style="left:230.8px;top:389.5px;width:200px;text-align:center;transform:scaleX(0.86);font-size:7.7px;font-weight:bold;color:#262626;line-height:9px;">18</div>
<div class="t" style="left:246.60000000000002px;top:389.5px;width:200px;text-align:center;transform:scaleX(0.86);font-size:7.7px;font-weight:bold;color:#262626;line-height:9px;">17</div>
<div class="t" style="left:262.40000000000003px;top:389.5px;width:200px;text-align:center;transform:scaleX(0.86);font-size:7.7px;font-weight:bold;color:#262626;line-height:9px;">16</div>
<div class="t" style="left:278.20000000000005px;top:389.5px;width:200px;text-align:center;transform:scaleX(0.86);font-size:7.7px;font-weight:bold;color:#262626;line-height:9px;">15</div>
<div class="t" style="left:294.00000000000006px;top:389.5px;width:200px;text-align:center;transform:scaleX(0.86);font-size:7.7px;font-weight:bold;color:#262626;line-height:9px;">14</div>
<div class="t" style="left:309.80000000000007px;top:389.5px;width:200px;text-align:center;transform:scaleX(0.86);font-size:7.7px;font-weight:bold;color:#262626;line-height:9px;">13</div>
<div class="t" style="left:325.6px;top:389.5px;width:200px;text-align:center;transform:scaleX(0.86);font-size:7.7px;font-weight:bold;color:#262626;line-height:9px;">12</div>
<div class="t" style="left:341.40000000000003px;top:389.5px;width:200px;text-align:center;transform:scaleX(0.86);font-size:7.7px;font-weight:bold;color:#262626;line-height:9px;">11</div>
<div class="t" style="left:357.20000000000005px;top:389.5px;width:200px;text-align:center;transform:scaleX(0.86);font-size:7.7px;font-weight:bold;color:#262626;line-height:9px;">10</div>
<div class="t" style="left:373.00000000000006px;top:389.5px;width:200px;text-align:center;transform:scaleX(0.86);font-size:7.7px;font-weight:bold;color:#262626;line-height:9px;">9</div>
<div class="t" style="left:388.80000000000007px;top:389.5px;width:200px;text-align:center;transform:scaleX(0.86);font-size:7.7px;font-weight:bold;color:#262626;line-height:9px;">8</div>
<div class="t" style="left:404.6px;top:389.5px;width:200px;text-align:center;transform:scaleX(0.86);font-size:7.7px;font-weight:bold;color:#262626;line-height:9px;">7</div>
<div class="t" style="left:420.4px;top:389.5px;width:200px;text-align:center;transform:scaleX(0.86);font-size:7.7px;font-weight:bold;color:#262626;line-height:9px;">6</div>
<div class="t" style="left:436.20000000000005px;top:389.5px;width:200px;text-align:center;transform:scaleX(0.86);font-size:7.7px;font-weight:bold;color:#262626;line-height:9px;">5</div>
<div class="t" style="left:452.0px;top:389.5px;width:200px;text-align:center;transform:scaleX(0.86);font-size:7.7px;font-weight:bold;color:#262626;line-height:9px;">4</div>
<div class="t" style="left:-175.8px;top:479.5px;width:200px;text-align:right;transform:scaleX(0.86);transform-origin:100% 50%;font-size:7.7px;font-weight:bold;color:#1e1e1e;line-height:9px;letter-spacing:-0.1px;-webkit-text-stroke:0.15px #1e1e1e;">270</div>
<div class="t" style="left:-175.8px;top:471.05px;width:200px;text-align:right;transform:scaleX(0.86);transform-origin:100% 50%;font-size:7.7px;font-weight:bold;color:#1e1e1e;line-height:9px;letter-spacing:-0.1px;-webkit-text-stroke:0.15px #1e1e1e;">280</div>
<div class="t" style="left:-175.8px;top:462.6px;width:200px;text-align:right;transform:scaleX(0.86);transform-origin:100% 50%;font-size:7.7px;font-weight:bold;color:#1e1e1e;line-height:9px;letter-spacing:-0.1px;-webkit-text-stroke:0.15px #1e1e1e;">290</div>
<div class="t" style="left:-175.8px;top:454.15000000000003px;width:200px;text-align:right;transform:scaleX(0.86);transform-origin:100% 50%;font-size:7.7px;font-weight:bold;color:#1e1e1e;line-height:9px;letter-spacing:-0.1px;-webkit-text-stroke:0.15px #1e1e1e;">300</div>
<div class="t" style="left:-175.8px;top:445.7px;width:200px;text-align:right;transform:scaleX(0.86);transform-origin:100% 50%;font-size:7.7px;font-weight:bold;color:#1e1e1e;line-height:9px;letter-spacing:-0.1px;-webkit-text-stroke:0.15px #1e1e1e;">310</div>
<div class="t" style="left:-175.8px;top:437.25px;width:200px;text-align:right;transform:scaleX(0.86);transform-origin:100% 50%;font-size:7.7px;font-weight:bold;color:#1e1e1e;line-height:9px;letter-spacing:-0.1px;-webkit-text-stroke:0.15px #1e1e1e;">320</div>
<div class="t" style="left:-175.8px;top:428.8px;width:200px;text-align:right;transform:scaleX(0.86);transform-origin:100% 50%;font-size:7.7px;font-weight:bold;color:#1e1e1e;line-height:9px;letter-spacing:-0.1px;-webkit-text-stroke:0.15px #1e1e1e;">330</div>
<svg style="left:2px;top:423px" width="559" height="83" viewBox="2 423 559 83">
<line x1="27.7" y1="483.5" x2="556.5" y2="483.5" stroke="#2a2a2a" stroke-width="1.2" stroke-dasharray="1.4 1.7" fill="none"/>
<line x1="332.4" y1="475.5" x2="556.5" y2="475.5" stroke="#2a2a2a" stroke-width="1.2" stroke-dasharray="1.4 1.7" fill="none"/>
<line x1="27.7" y1="466.5" x2="556.5" y2="466.5" stroke="#2a2a2a" stroke-width="1.2" stroke-dasharray="1.4 1.7" fill="none"/>
<line x1="27.7" y1="458.5" x2="556.5" y2="458.5" stroke="#2a2a2a" stroke-width="1.2" stroke-dasharray="1.4 1.7" fill="none"/>
<line x1="27.7" y1="449.5" x2="556.5" y2="449.5" stroke="#2a2a2a" stroke-width="1.2" stroke-dasharray="1.4 1.7" fill="none"/>
<line x1="332.4" y1="441.5" x2="556.5" y2="441.5" stroke="#2a2a2a" stroke-width="1.2" stroke-dasharray="1.4 1.7" fill="none"/>
<line x1="27.7" y1="432.5" x2="556.5" y2="432.5" stroke="#2a2a2a" stroke-width="1.2" stroke-dasharray="1.4 1.7" fill="none"/>
<line x1="71.5" y1="424" x2="71.5" y2="491" stroke="#2a2a2a" stroke-width="1.1" stroke-dasharray="1.5 1.6" fill="none"/>
<line x1="115.5" y1="424" x2="115.5" y2="491" stroke="#2a2a2a" stroke-width="1.1" stroke-dasharray="1.5 1.6" fill="none"/>
<line x1="159.5" y1="424" x2="159.5" y2="491" stroke="#2a2a2a" stroke-width="1.1" stroke-dasharray="1.5 1.6" fill="none"/>
<line x1="203.5" y1="424" x2="203.5" y2="491" stroke="#2a2a2a" stroke-width="1.1" stroke-dasharray="1.5 1.6" fill="none"/>
<line x1="248.5" y1="424" x2="248.5" y2="491" stroke="#2a2a2a" stroke-width="1.1" stroke-dasharray="1.5 1.6" fill="none"/>
<line x1="292.5" y1="424" x2="292.5" y2="491" stroke="#2a2a2a" stroke-width="1.1" stroke-dasharray="1.5 1.6" fill="none"/>
<line x1="336.5" y1="424" x2="336.5" y2="491" stroke="#2a2a2a" stroke-width="1.1" stroke-dasharray="1.5 1.6" fill="none"/>
<line x1="380.5" y1="424" x2="380.5" y2="491" stroke="#2a2a2a" stroke-width="1.1" stroke-dasharray="1.5 1.6" fill="none"/>
<line x1="424.5" y1="424" x2="424.5" y2="491" stroke="#2a2a2a" stroke-width="1.1" stroke-dasharray="1.5 1.6" fill="none"/>
<line x1="469.5" y1="424" x2="469.5" y2="491" stroke="#2a2a2a" stroke-width="1.1" stroke-dasharray="1.5 1.6" fill="none"/>
<line x1="513.5" y1="424" x2="513.5" y2="491" stroke="#2a2a2a" stroke-width="1.1" stroke-dasharray="1.5 1.6" fill="none"/>
<line x1="557.5" y1="424" x2="557.5" y2="491" stroke="#2a2a2a" stroke-width="1.1" stroke-dasharray="1.5 1.6" fill="none"/>
<path d="M27.7 441.2 H332.4 V475.1 H27.7" fill="none" stroke="#e06878" stroke-width="1.5"/>
<line x1="27.7" y1="455.6" x2="332.4" y2="455.6" stroke="#4a9a6a" stroke-width="2.4"/>
<line x1="27.7" y1="458.8" x2="332.4" y2="458.8" stroke="#1a2a60" stroke-width="1.8"/>
<path d="M27.7 447.8 H213.9 V491.4" fill="none" stroke="#333" stroke-width="1.8"/>
<path d="M280 457.5 Q300 459.5 318 458.5 Q326 454 332.4 452.5 L332.4 459 Q305 462 280 460 Z" fill="#2a7050" opacity="0.8"/>
<polyline points="259.9,456 262.3,452.3 265,453.5 269,452 272.5,451 275.5,450.2 276.3,444.8 277,450.2 280.3,452 292,452.5 300,453 309.8,453.8 314,453 317.7,449.6 320,448.6 323,447.9 326,449 329.5,451 332.4,452" fill="none" stroke="#111" stroke-width="1.3" stroke-linejoin="round"/>
<polyline points="259.9,459.8 262,462 263.8,463.8 268,463 271,466 273.7,468.2 275.5,463 278,460.5 282,460 290,460.8 300,461 309.5,460.5 310.5,466.3 312,460.5 314,462.8 318,460 322,459 325,458.2 328,461.5 330,462.5 332.4,458" fill="none" stroke="#111" stroke-width="1.3" stroke-linejoin="round"/>
<line x1="259.9" y1="456" x2="259.9" y2="491.4" stroke="#111" stroke-width="1.7"/>
<line x1="332.4" y1="451" x2="332.4" y2="491.4" stroke="#111" stroke-width="1.8"/>
</svg>
<div class="t" style="left:-72.7px;top:492px;width:200px;text-align:center;transform:scaleX(0.88);font-size:7.7px;color:#262626;line-height:9px;-webkit-text-stroke:0.2px #262626;">00:00</div>
<div class="t" style="left:-28.53px;top:492px;width:200px;text-align:center;transform:scaleX(0.88);font-size:7.7px;color:#262626;line-height:9px;-webkit-text-stroke:0.2px #262626;">02:00</div>
<div class="t" style="left:15.64px;top:492px;width:200px;text-align:center;transform:scaleX(0.88);font-size:7.7px;color:#262626;line-height:9px;-webkit-text-stroke:0.2px #262626;">04:00</div>
<div class="t" style="left:59.81px;top:492px;width:200px;text-align:center;transform:scaleX(0.88);font-size:7.7px;color:#262626;line-height:9px;-webkit-text-stroke:0.2px #262626;">06:00</div>
<div class="t" style="left:103.98000000000002px;top:492px;width:200px;text-align:center;transform:scaleX(0.88);font-size:7.7px;color:#262626;line-height:9px;-webkit-text-stroke:0.2px #262626;">08:00</div>
<div class="t" style="left:148.15000000000003px;top:492px;width:200px;text-align:center;transform:scaleX(0.88);font-size:7.7px;color:#262626;line-height:9px;-webkit-text-stroke:0.2px #262626;">10:00</div>
<div class="t" style="left:192.32px;top:492px;width:200px;text-align:center;transform:scaleX(0.88);font-size:7.7px;color:#262626;line-height:9px;-webkit-text-stroke:0.2px #262626;">12:00</div>
<div class="t" style="left:236.49px;top:492px;width:200px;text-align:center;transform:scaleX(0.88);font-size:7.7px;color:#262626;line-height:9px;-webkit-text-stroke:0.2px #262626;">14:00</div>
<div class="t" style="left:280.66px;top:492px;width:200px;text-align:center;transform:scaleX(0.88);font-size:7.7px;color:#262626;line-height:9px;-webkit-text-stroke:0.2px #262626;">16:00</div>
<div class="t" style="left:324.83000000000004px;top:492px;width:200px;text-align:center;transform:scaleX(0.88);font-size:7.7px;color:#262626;line-height:9px;-webkit-text-stroke:0.2px #262626;">18:00</div>
<div class="t" style="left:369.00000000000006px;top:492px;width:200px;text-align:center;transform:scaleX(0.88);font-size:7.7px;color:#262626;line-height:9px;-webkit-text-stroke:0.2px #262626;">20:00</div>
<div class="t" style="left:413.16999999999996px;top:492px;width:200px;text-align:center;transform:scaleX(0.88);font-size:7.7px;color:#262626;line-height:9px;-webkit-text-stroke:0.2px #262626;">22:00</div>
<div class="t" style="left:449px;top:492px;width:200px;text-align:center;transform:scaleX(0.88);font-size:7.7px;color:#262626;line-height:9px;-webkit-text-stroke:0.2px #262626;">24:00</div>
<div style="left:566px;top:54px;width:99px;height:14px;background:#8b8d8d;border-right:1.5px solid #1a1a1a;border-bottom:1.5px solid #1a1a1a;"></div>
<div class="t" style="left:515px;top:56px;width:200px;text-align:center;font-size:7px;color:#222;line-height:9px;">Print</div>
<div style="left:566px;top:68px;width:99px;height:29px;background:#4db848;border-right:1.5px solid #1a1a1a;border-bottom:1.5px solid #1a1a1a;"></div>
<div class="t" style="left:570.5px;top:71px;font-size:8.8px;color:#e0fad8;line-height:11px;-webkit-text-stroke:0.25px #e0fad8;">Akt.Messung</div>
<div class="t" style="left:571px;top:82px;font-size:11px;color:#f0fff0;line-height:13px;letter-spacing:0.3px;-webkit-text-stroke:0.3px #f0fff0;">0,000</div>
<div class="t" style="left:460px;top:81.5px;width:200px;text-align:right;font-size:8.6px;color:#e0fae0;line-height:11px;-webkit-text-stroke:0.2px #e0fae0;">[µm]</div>
<div style="left:566px;top:97px;width:99px;height:29px;background:#050505;border-right:1.5px solid #1a1a1a;border-bottom:1.5px solid #1a1a1a;"></div>
<div class="t" style="left:570.5px;top:100px;font-size:8.6px;color:#fff;line-height:11px;-webkit-text-stroke:0.45px #fff;">Mittelwert</div>
<div class="t" style="left:571px;top:110.5px;font-size:11px;color:#fff;line-height:13px;letter-spacing:0.3px;-webkit-text-stroke:0.2px #fff;">304,690</div>
<div class="t" style="left:460px;top:111px;width:200px;text-align:right;font-size:8.4px;color:#fff;line-height:11px;-webkit-text-stroke:0.3px #fff;">[µm]</div>
<div style="left:566px;top:127px;width:99px;height:55px;background:#050505;border-right:1.5px solid #1a1a1a;border-bottom:1.5px solid #1a1a1a;"></div>
<div class="t" style="left:570.5px;top:129px;font-size:8.6px;color:#fff;line-height:11px;-webkit-text-stroke:0.45px #fff;">2 Sigma</div>
<div class="t" style="left:571px;top:140.5px;font-size:11px;color:#fff;line-height:13px;letter-spacing:0.3px;-webkit-text-stroke:0.2px #fff;">3,06</div>
<div class="t" style="left:460px;top:140px;width:200px;text-align:right;font-size:8.4px;color:#fff;line-height:11px;-webkit-text-stroke:0.3px #fff;">[µm]</div>
<div class="t" style="left:572px;top:152px;font-size:6.5px;font-weight:bold;color:#ddd;line-height:9px;">Max:</div>
<div class="t" style="left:417px;top:152px;width:200px;text-align:right;font-size:6.7px;color:#e4e4e4;line-height:9px;-webkit-text-stroke:0.25px #e4e4e4;">4,25</div>
<div class="t" style="left:624px;top:152px;font-size:6.7px;color:#e4e4e4;line-height:9px;-webkit-text-stroke:0.25px #e4e4e4;">(&nbsp;&nbsp;309,00&nbsp;&nbsp;&nbsp;)</div>
<div class="t" style="left:572px;top:165px;font-size:6.5px;font-weight:bold;color:#ddd;line-height:9px;">Min:</div>
<div class="t" style="left:417px;top:165px;width:200px;text-align:right;font-size:6.7px;color:#e4e4e4;line-height:9px;-webkit-text-stroke:0.25px #e4e4e4;">2,45</div>
<div class="t" style="left:624px;top:165px;font-size:6.7px;color:#e4e4e4;line-height:9px;-webkit-text-stroke:0.25px #e4e4e4;">(&nbsp;&nbsp;302,30&nbsp;&nbsp;&nbsp;)</div>
<div style="left:561px;top:235px;width:2px;height:126px;background:#1c1c1c;"></div>
<div style="left:566px;top:237px;width:99px;height:30px;background:#e8262c;border-right:1.5px solid #1a1a1a;border-bottom:2px solid #1a1a1a;border-top:1px solid #f48a8a;border-left:1px solid #f48a8a;"></div>
<div class="t" style="left:571px;top:239.3px;font-size:8.6px;color:#fff;line-height:11px;-webkit-text-stroke:0.45px #fff;">+Toleranz</div>
<div class="t" style="left:438.5px;top:248px;width:200px;text-align:right;font-size:11px;color:#fff;line-height:13px;-webkit-text-stroke:0.35px #fff;">20,0</div>
<div class="t" style="left:459.5px;top:248.5px;width:200px;text-align:right;font-size:7.6px;font-weight:bold;color:#fff;line-height:10px;">[µm]</div>
<div style="left:566px;top:268px;width:99px;height:30px;background:#2553b0;border-right:1.5px solid #1a1a1a;border-bottom:2px solid #1a1a1a;border-top:1px solid #6a90d8;border-left:1px solid #6a90d8;"></div>
<div class="t" style="left:571px;top:270.3px;font-size:8.6px;color:#fff;line-height:11px;-webkit-text-stroke:0.45px #fff;">Sollwert</div>
<div class="t" style="left:438.5px;top:279px;width:200px;text-align:right;font-size:11px;color:#fff;line-height:13px;-webkit-text-stroke:0.35px #fff;">300,0</div>
<div class="t" style="left:459.5px;top:279.5px;width:200px;text-align:right;font-size:7.6px;font-weight:bold;color:#fff;line-height:10px;">[µm]</div>
<div style="left:566px;top:299px;width:99px;height:30px;background:#e8262c;border-right:1.5px solid #1a1a1a;border-bottom:2px solid #1a1a1a;border-top:1px solid #f48a8a;border-left:1px solid #f48a8a;"></div>
<div class="t" style="left:571px;top:301.3px;font-size:8.6px;color:#fff;line-height:11px;-webkit-text-stroke:0.45px #fff;">-Toleranz</div>
<div class="t" style="left:438.5px;top:310px;width:200px;text-align:right;font-size:11px;color:#fff;line-height:13px;-webkit-text-stroke:0.35px #fff;">20,0</div>
<div class="t" style="left:459.5px;top:310.5px;width:200px;text-align:right;font-size:7.6px;font-weight:bold;color:#fff;line-height:10px;">[µm]</div>
<div style="left:566px;top:330px;width:99px;height:30px;background:#a9abab;border-right:1.5px solid #1a1a1a;border-bottom:2px solid #1a1a1a;border-top:1px solid #d0d2d2;border-left:1px solid #d0d2d2;"></div>
<div class="t" style="left:571px;top:332.3px;font-size:8.6px;color:#f0f2f2;line-height:11px;-webkit-text-stroke:0.45px #f0f2f2;">Nettobreite</div>
<div class="t" style="left:433.5px;top:341px;width:200px;text-align:right;font-size:11px;color:#f0f2f2;line-height:13px;-webkit-text-stroke:0.35px #f0f2f2;">615,0</div>
<div class="t" style="left:459.5px;top:341.5px;width:200px;text-align:right;font-size:7.6px;font-weight:bold;color:#f0f2f2;line-height:10px;letter-spacing:0.4px;">(mm)</div>
<div style="left:0px;top:511px;width:126px;height:23px;background:#6ec43c;border-right:2px solid #222;border-bottom:2px solid #222;border-top:1px solid #a8e08a;border-left:1px solid #a8e08a;"></div>
<div class="t" style="left:-36.5px;top:518.5px;width:200px;text-align:center;font-size:7.3px;font-weight:bold;color:#10300a;line-height:10px;">Anlage Bereit</div>
<div style="left:173px;top:512px;width:99px;height:21px;background:#ec2a2e;border-right:2px solid #222;border-bottom:2px solid #222;"></div>
<div class="t" style="left:123px;top:518px;width:200px;text-align:center;font-size:7px;font-weight:bold;color:#4a0808;line-height:10px;">Querprofilregelung</div>
<div style="left:274px;top:512px;width:101px;height:21px;background:#ec2a2e;border-right:2px solid #222;border-bottom:2px solid #222;"></div>
<div class="t" style="left:224px;top:518px;width:200px;text-align:center;font-size:7px;font-weight:bold;color:#4a0808;line-height:10px;">Laengsprofilregelung</div>
<svg style="left:270px;top:494px;z-index:10" width="110" height="28" viewBox="270 494 110 28">
<g fill="rgba(70,70,70,0.45)">
<ellipse cx="289.4" cy="505.6" rx="8.6" ry="6.3"/>
<ellipse cx="297.5" cy="512.3" rx="7" ry="5.5"/>
</g>
<g fill="rgba(255,255,255,0.35)">
<circle cx="286.5" cy="504" r="1"/><circle cx="292.7" cy="504" r="1"/>
<circle cx="295" cy="509.9" r="0.9"/><circle cx="300.5" cy="509.9" r="0.9"/>
</g>
<g fill="none" stroke="rgba(70,70,70,0.5)" stroke-width="1.5" stroke-linecap="round" stroke-linejoin="round">
<path d="M318 502.2 L313.6 508.8"/>
<path d="M321.8 502.2 Q324 506 327 508.6"/>
<path d="M319.8 508 L315.2 515 L325.5 514.3"/>
<path d="M322.8 511 L326.2 515.8"/>
<path d="M337 501.9 Q335 506.5 330.6 509.2"/>
<path d="M337 503.6 Q339.5 507 344 509"/>
<path d="M333.4 508.2 Q332.5 512.5 330.5 516"/>
<path d="M333.4 510.6 L336.3 515.8"/>
<path d="M340.3 508.2 Q339.6 512.5 337.6 516"/>
<path d="M340.3 510.6 L344 515.8"/>
<path d="M351.2 502.3 H360.8 V506.4 H351.2 Z"/>
<path d="M348.2 508.6 H364"/>
<path d="M353.5 508.8 L352.3 511.6 H361.2 Q361 515 359.5 516 L357 515.4"/>
</g>
<circle cx="375.1" cy="509.8" r="0.8" fill="rgba(70,70,70,0.5)"/>
</svg>
<div class="t" style="left:386.7px;top:499.5px;font-size:17.8px;line-height:20px;color:rgba(70,70,70,0.5);letter-spacing:1.2px;z-index:10;">Highwell Industry Technology</div>
</body></html>
